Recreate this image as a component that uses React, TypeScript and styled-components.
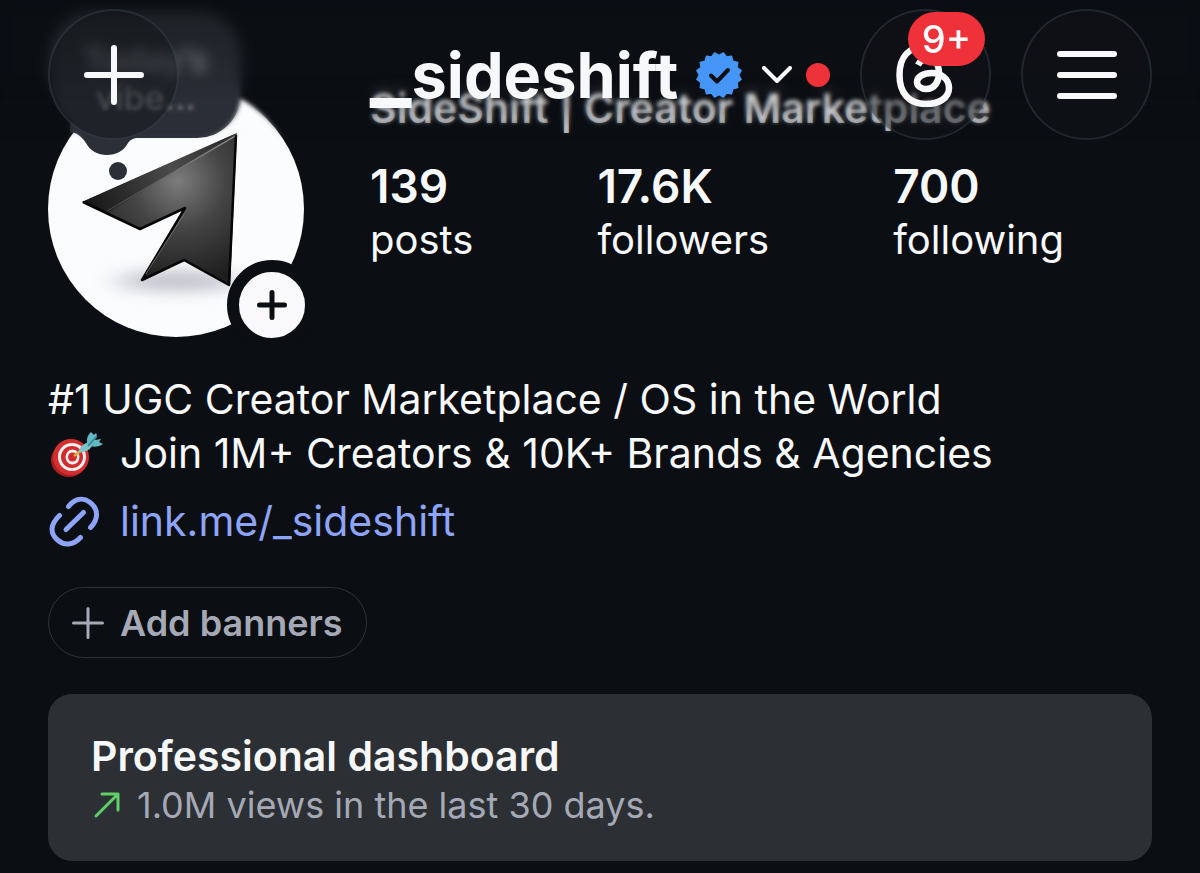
import React from "react";
import styled, { createGlobalStyle } from "styled-components";

const Global = createGlobalStyle`
  * { box-sizing: border-box; }
  html, body { margin: 0; background: #0b0e13; }
  body { font-family: Inter, "Liberation Sans", sans-serif; color: #f7f8fa; }
  h1, h2, p, dl, dd, dt { margin: 0; }
  button { font: inherit; color: inherit; cursor: pointer; }
`;

const Page = styled.div`
  position: relative;
  min-height: 100vh;
  padding-bottom: 12px;
  background: #0b0e13;
`;

const HeaderVeil = styled.div<{ $height: number; $blur: number }>`
  position: absolute;
  top: 0;
  left: 0;
  right: 0;
  height: ${(p) => p.$height}px;
  backdrop-filter: blur(${(p) => p.$blur}px);
  mask-image: linear-gradient(to bottom, #000 75%, transparent);
`;

const Header = styled.header`
  position: absolute;
  top: 0;
  left: 0;
  right: 0;
  display: grid;
  grid-template-columns: 1fr auto 1fr;
  align-items: center;
  padding: 9px 48px;
`;

const Actions = styled.div`
  display: flex;
  justify-content: flex-end;
  gap: 30px;
`;

const GlassButton = styled.button`
  position: relative;
  display: grid;
  place-items: center;
  width: 131px;
  height: 131px;
  padding: 0;
  border: 2px solid rgba(110, 130, 150, 0.2);
  border-radius: 50%;
  background: rgba(17, 21, 25, 0.45);
`;

const Count = styled.span`
  position: absolute;
  top: 1px;
  left: 46px;
  width: 77px;
  height: 54px;
  border-radius: 27px;
  background: #ef3239;
  color: #fff;
  font-size: 38px;
  font-weight: 500;
  line-height: 54px;
  text-align: center;
`;

const AccountSwitch = styled.button`
  display: flex;
  align-items: center;
  padding: 0;
  border: 0;
  background: none;
`;

const Handle = styled.span`
  font-size: 63px;
  font-weight: 700;
  line-height: 72px;
`;

const Underscore = styled.span`
  font-size: 88px;
  line-height: 1px;
`;

const BadgeIcon = styled.svg`
  width: 46px;
  height: 46px;
  margin: 0 20px 0 18px;
`;

const RedDot = styled.span`
  width: 24px;
  height: 24px;
  margin-left: 14px;
  border-radius: 50%;
  background: #ef3239;
`;

const Main = styled.main`
  padding: 81px 48px 0;
`;

const Profile = styled.section`
  display: flex;
  gap: 66px;
`;

const AvatarBox = styled.div`
  position: relative;
  flex: none;
  width: 256px;
  height: 256px;
`;

const AddStory = styled.button`
  position: absolute;
  right: -13px;
  bottom: -13px;
  display: grid;
  place-items: center;
  width: 90px;
  height: 90px;
  padding: 0;
  border: 12px solid #0b0e13;
  border-radius: 50%;
  background: #f9f9fb;

  && { color: #0b0e13; }
`;

const Note = styled.div`
  position: absolute;
  top: -70px;
  left: 2px;
  width: 191px;
  height: 127px;
  padding: 30px 20px 0;
  border-radius: 44px 44px 44px 64px;
  background: linear-gradient(to bottom, #1d2025, #2b2f37 75%);
  color: #74787f;
  font-size: 34px;
  font-weight: 500;
  line-height: 38px;
  text-align: center;
`;

const NoteTail = styled.svg`
  position: absolute;
  top: 112px;
  left: 18px;
`;

const Summary = styled.div`
  padding-top: 2px;
`;

const DisplayName = styled.h1`
  color: #c9cbce;
  font-size: 41px;
  font-weight: 600;
  line-height: 50px;
`;

const Stats = styled.dl`
  display: flex;
  gap: 124px;
  margin-top: 26px;
`;

const Stat = styled.div`
  display: flex;
  flex-direction: column-reverse;
`;

const StatValue = styled.dd`
  font-size: 46px;
  font-weight: 600;
  line-height: 54px;
`;

const StatLabel = styled.dt`
  font-size: 40px;
  line-height: 54px;
`;

const Bio = styled.section`
  margin-top: 35px;
  font-size: 41px;
  line-height: 54px;
`;

const IconLine = styled.p`
  display: flex;
  align-items: center;
  gap: 16px;
  height: 54px;
`;

const BioLink = styled.a`
  display: flex;
  align-items: center;
  gap: 20px;
  width: fit-content;
  margin-top: 14px;
  color: #8ea4f8;
  text-decoration: none;
`;

const BannerButton = styled.button`
  display: flex;
  align-items: center;
  gap: 16px;
  height: 71px;
  margin-top: 39px;
  padding: 0 23px;
  border: 1px solid #2e3136;
  border-radius: 36px;
  background: none;

  && {
    color: #a5a9b5;
    font-size: 36px;
    font-weight: 600;
  }
`;

const Dashboard = styled.section`
  margin-top: 36px;
  padding: 35px 43px 34px;
  border-radius: 24px;
  background: #2c2f34;
`;

const DashboardTitle = styled.h2`
  font-size: 41px;
  font-weight: 600;
  line-height: 54px;
`;

const DashboardNote = styled.p`
  display: flex;
  align-items: center;
  gap: 16px;
  color: #a5a9b5;
  font-size: 36px;
  line-height: 44px;
`;

function Plus({ size, stroke }: { size: number; stroke: number }) {
  const m = size / 2;
  const e = stroke / 2;
  return (
    <svg width={size} height={size} fill="none" stroke="currentColor" strokeWidth={stroke} strokeLinecap="round" aria-hidden>
      <path d={`M${m} ${e}V${size - e}M${e} ${m}H${size - e}`} />
    </svg>
  );
}

function Verified() {
  const pts = Array.from({ length: 32 }, (_, i) => {
    const r = i % 2 ? 19.5 : 22.5;
    const a = (i * Math.PI) / 16 + Math.PI / 16;
    return `${23 + r * Math.sin(a)},${23 - r * Math.cos(a)}`;
  }).join(" ");
  return (
    <BadgeIcon viewBox="0 0 46 46" role="img" aria-label="Verified">
      <polygon points={pts} fill="#4596f7" stroke="#4596f7" strokeWidth="1.5" strokeLinejoin="round" />
      <path d="M15 23.5l6 6L32 18" fill="none" stroke="#0b0e13" strokeWidth="4" strokeLinecap="round" strokeLinejoin="round" />
    </BadgeIcon>
  );
}

function Threads() {
  return (
    <svg width="60" height="64" viewBox="0 0 60 64" fill="none" stroke="#f9f9fb" strokeWidth="6.5" aria-hidden>
      <path d="M51 17C47 8 40 3.5 30 3.5C13 3.5 3.5 14 3.5 32C3.5 50 13 61 30 61C43 61 53 55 53 45C53 35 44 30 36 30C27 30 21 34 21 39C21 43 25 46 30 46C39 46 43 38 43 30C43 22 39 16 32 16C27 16 24 18 22 22" />
    </svg>
  );
}

function AvatarArt() {
  return (
    <svg width="256" height="256" viewBox="0 0 256 256" role="img" aria-label="SideShift logo">
      <defs>
        <radialGradient id="shine" cx="130" cy="100" r="105" gradientUnits="userSpaceOnUse">
          <stop offset="0" stopColor="#7c7c7c" />
          <stop offset="0.45" stopColor="#454545" />
          <stop offset="1" stopColor="#1d1d1d" />
        </radialGradient>
        <linearGradient id="fold" x1="40" y1="125" x2="180" y2="60" gradientUnits="userSpaceOnUse">
          <stop offset="0" stopColor="#161616" />
          <stop offset="0.6" stopColor="#4c4c4c" />
          <stop offset="1" stopColor="#2a2a2a" />
        </linearGradient>
        <linearGradient id="ridge" x1="60" y1="127" x2="190" y2="54" gradientUnits="userSpaceOnUse">
          <stop offset="0" stopColor="#444" />
          <stop offset="1" stopColor="#999" />
        </linearGradient>
        <filter id="soft" x="-50%" y="-200%" width="200%" height="500%">
          <feGaussianBlur stdDeviation="14 8" />
        </filter>
        <clipPath id="disc"><circle cx="128" cy="128" r="128" /></clipPath>
      </defs>
      <g clipPath="url(#disc)">
        <rect width="256" height="256" fill="#fbfcfd" />
        <ellipse cx="130" cy="200" rx="62" ry="9" fill="#a2a4b2" opacity="0.75" filter="url(#soft)" />
        <path d="M34 121L189 52L182 205L136 180L93 200L137 126L92 149Z" fill="url(#shine)" />
        <path d="M34 121L189 52L59 132Z" fill="url(#fold)" />
        <path d="M59 130L189 54" stroke="url(#ridge)" strokeWidth="1.2" />
        <path d="M188 54L181 204L136 179L94 199L137 127L92 148L35 121" fill="none" stroke="#060606" strokeWidth="2.5" strokeLinejoin="round" />
        <path d="M136 133L98 193" stroke="#707070" strokeWidth="1" />
      </g>
    </svg>
  );
}

function Target() {
  return (
    <svg width="56" height="56" viewBox="0 -6 56 56" aria-hidden>
      <ellipse cx="21" cy="29" rx="18" ry="17" fill="#a81f22" />
      <ellipse cx="23" cy="26" rx="18" ry="18" fill="#d32f2f" />
      <ellipse cx="24" cy="26" rx="14" ry="14" fill="#fbeeee" />
      <ellipse cx="24" cy="26" rx="11" ry="11" fill="#cf2c2d" />
      <ellipse cx="24.5" cy="26" rx="7" ry="7.5" fill="#fbeeee" />
      <ellipse cx="24.5" cy="26" rx="4.5" ry="4.5" fill="#cf2c2d" />
      <path d="M26 25L34 19" stroke="#e0a83a" strokeWidth="2.5" />
      <path d="M30 21Q33 13 41 11L44 15Q40 22 30 21Z" fill="#7cc4ca" />
      <path d="M39 13Q38 5 43 1L46 4L48 2Q50 5 47 9L53 8L51 11L55 13Q50 17 42 15Z" fill="#62b9c2" />
      <path d="M40 15L49 5" stroke="#2e7f8c" strokeWidth="1.2" />
    </svg>
  );
}

function LinkIcon() {
  return (
    <svg width="52" height="52" viewBox="0 0 52 52" fill="none" stroke="currentColor" strokeWidth="5" strokeLinecap="round" aria-hidden>
      <path d="M18 34.5L35.5 17.5" />
      <path d="M20.5 11.5C26.500 4 34.500 2 41.500 7C51 14 50.500 24 42.500 32.500" />
      <path d="M11.5 20.5C2.500 29 1.500 38 9.500 45C17.500 52 26.500 49 32.500 42.500" />
    </svg>
  );
}

const stats = [
  ["139", "posts"],
  ["17.6K", "followers"],
  ["700", "following"],
];

export default function App() {
  return (
    <Page>
      <Global />
      <Main>
        <Profile>
          <AvatarBox>
            <AvatarArt />
            <Note>
              Today’s vibe...
              <NoteTail width="76" height="60" viewBox="0 0 76 60" fill="#2b2f37" aria-hidden>
                <path d="M2 0V9C10 10 14 14 18 20C22 28 30 32 39 32C48 32 56 28 60 20C62 17 65 15 71 15V0Z" />
                <circle cx="50" cy="48" r="9" />
              </NoteTail>
            </Note>
            <AddStory aria-label="Add story"><Plus size={30} stroke={5} /></AddStory>
          </AvatarBox>
          <Summary>
            <DisplayName>SideShift | Creator Marketplace</DisplayName>
            <Stats>
              {stats.map(([value, label]) => (
                <Stat key={label}>
                  <StatLabel>{label}</StatLabel>
                  <StatValue>{value}</StatValue>
                </Stat>
              ))}
            </Stats>
          </Summary>
        </Profile>
        <Bio>
          <p>#1 UGC Creator Marketplace / OS in the World</p>
          <IconLine><Target />Join 1M+ Creators &amp; 10K+ Brands &amp; Agencies</IconLine>
          <BioLink href="#link"><LinkIcon />link.me/_sideshift</BioLink>
        </Bio>
        <BannerButton><Plus size={32} stroke={3} />Add banners</BannerButton>
        <Dashboard>
          <DashboardTitle>Professional dashboard</DashboardTitle>
          <DashboardNote>
            <svg width="30" height="30" viewBox="0 0 30 30" fill="none" stroke="#5fd068" strokeWidth="3" strokeLinecap="round" strokeLinejoin="round" aria-hidden>
              <path d="M5 26L27 4M11 4H27V20" />
            </svg>
            1.0M views in the last 30 days.
          </DashboardNote>
        </Dashboard>
      </Main>
      <HeaderVeil $height={140} $blur={2} />
      <HeaderVeil $height={100} $blur={6} />
      <Header>
        <GlassButton aria-label="Create"><Plus size={60} stroke={6} /></GlassButton>
        <AccountSwitch>
          <Handle><Underscore>_</Underscore>sideshift</Handle>
          <Verified />
          <svg width="30" height="18" viewBox="0 0 30 18" fill="none" stroke="#f9f9fb" strokeWidth="4" strokeLinecap="round" strokeLinejoin="round" aria-hidden>
            <path d="M2 2L15 15L28 2" />
          </svg>
          <RedDot />
        </AccountSwitch>
        <Actions>
          <GlassButton aria-label="Threads"><Threads /><Count>9+</Count></GlassButton>
          <GlassButton aria-label="Menu">
            <svg width="60" height="50" viewBox="0 0 60 50" stroke="#f9f9fb" strokeWidth="6" strokeLinecap="round" aria-hidden>
              <path d="M3 4H57M3 25H57M3 46H57" />
            </svg>
          </GlassButton>
        </Actions>
      </Header>
    </Page>
  );
}
